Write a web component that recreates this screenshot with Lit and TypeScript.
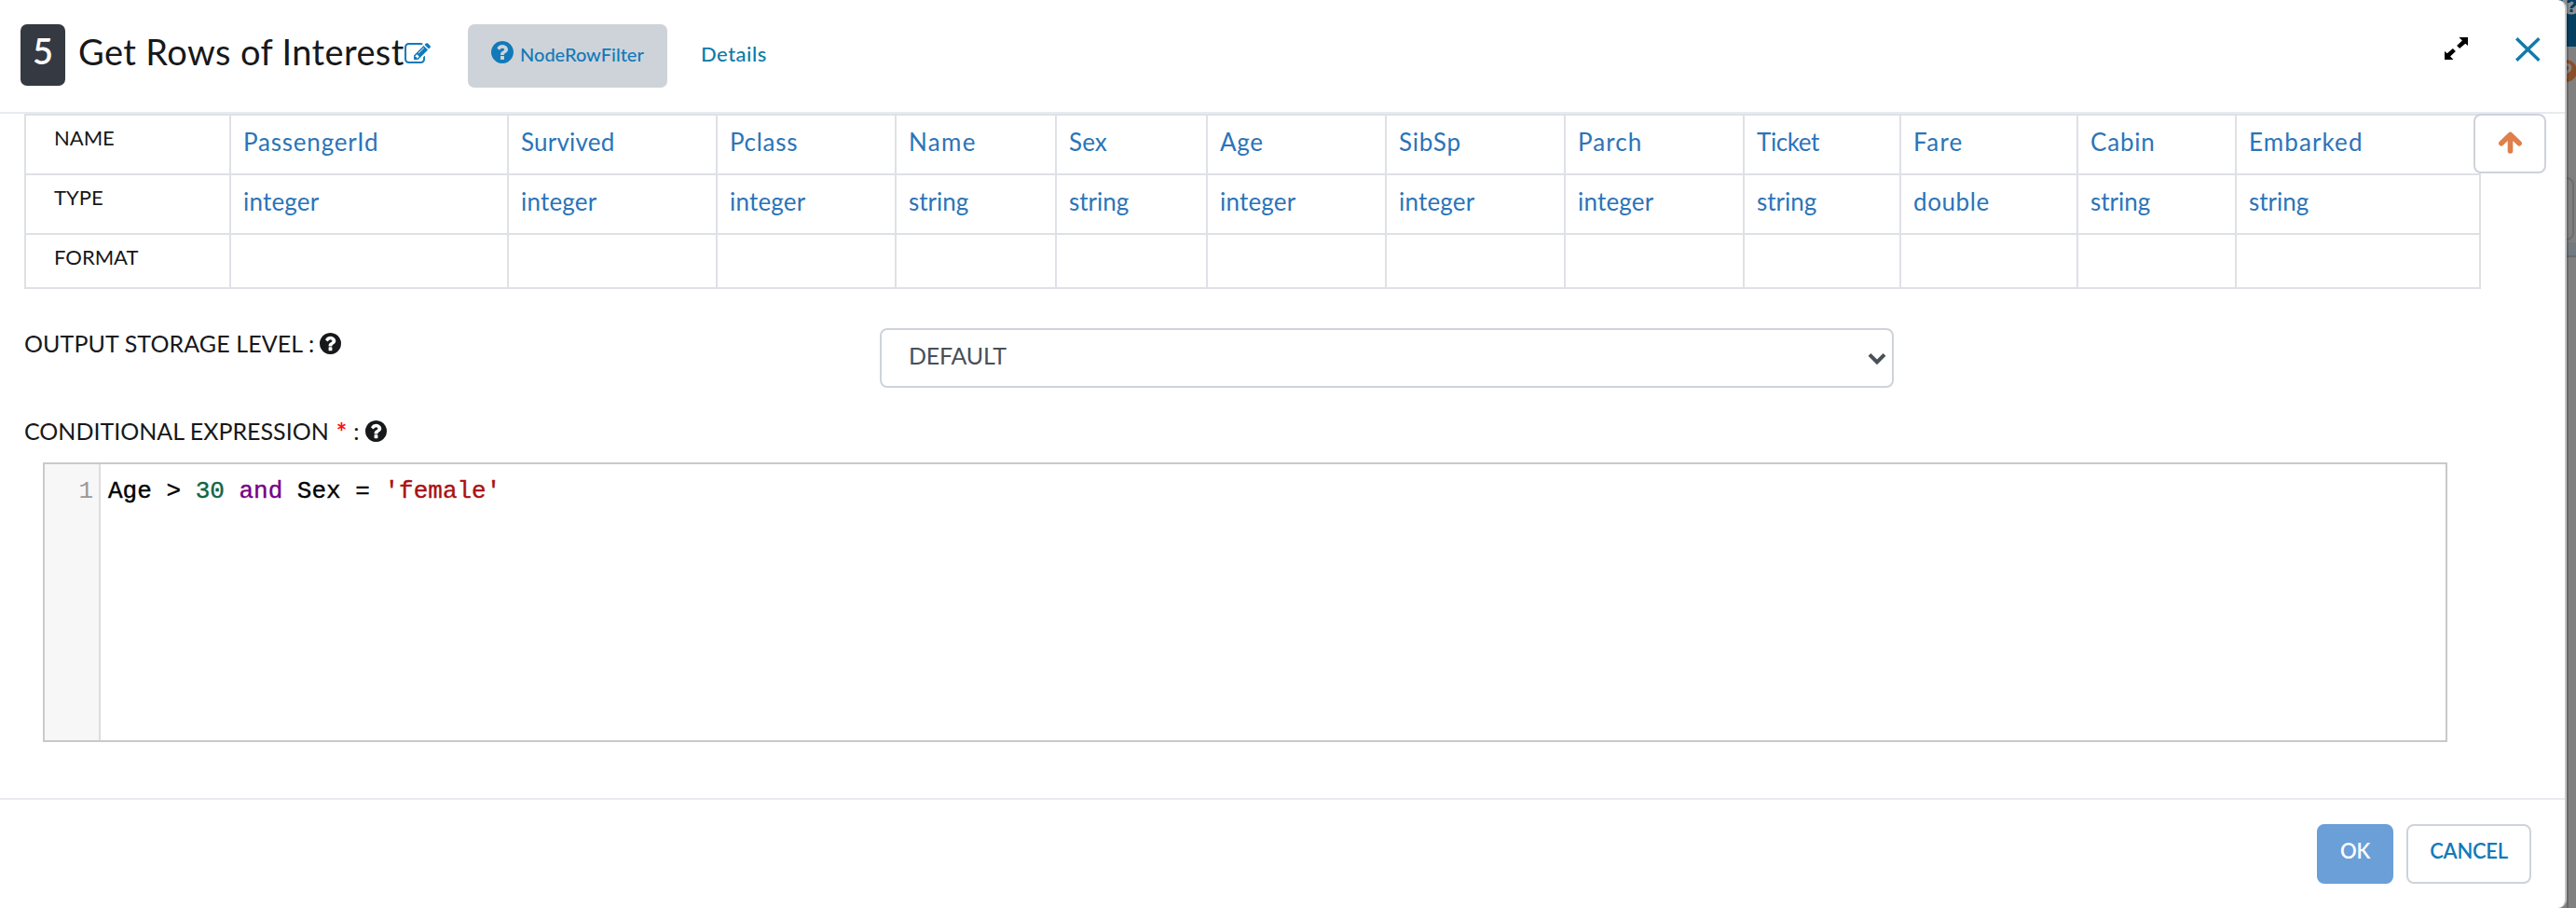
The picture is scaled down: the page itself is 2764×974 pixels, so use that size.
import { LitElement, html, css } from "lit";
import { customElement } from "lit/decorators.js";

interface Column {
  name: string;
  type: string;
  tracking: number;
}

const columns: Column[] = [
  { name: "PassengerId", type: "integer", tracking: 0.8 },
  { name: "Survived", type: "integer", tracking: 0.2 },
  { name: "Pclass", type: "integer", tracking: 0.7 },
  { name: "Name", type: "string", tracking: 1.3 },
  { name: "Sex", type: "string", tracking: 0.1 },
  { name: "Age", type: "integer", tracking: 0.7 },
  { name: "SibSp", type: "integer", tracking: 0.8 },
  { name: "Parch", type: "integer", tracking: 1.1 },
  { name: "Ticket", type: "string", tracking: -0.4 },
  { name: "Fare", type: "double", tracking: 1.3 },
  { name: "Cabin", type: "string", tracking: 0.8 },
  { name: "Embarked", type: "string", tracking: 1.1 },
];

const typeTracking: Record<string, number> = { integer: 0.2, string: 0, double: 0.6 };

const helpPath =
  "M1024 1376v-192q0-14-9-23t-23-9h-192q-14 0-23 9t-9 23v192q0 14 9 23t23 9h192q14 0 23-9t9-23zm256-672q0-88-55.5-163t-138.5-116-170-41q-243 0-371 213-15 24 8 42l132 100q7 6 19 6 16 0 25-12 53-68 86-92 34-24 86-24 48 0 85.5 26t37.5 59q0 38-20 61t-68 45q-63 28-115.5 86.5t-52.5 125.5v36q0 14 9 23t23 9h192q14 0 23-9t9-23q0-19 21.5-49.5t54.5-49.5q32-18 49-28.5t46-35 44.5-48 28-60.5 12.5-81zm384 192q0 209-103 385.5t-279.5 279.5-385.5 103-385.5-103-279.5-279.5-103-385.5 103-385.5 279.5-279.5 385.5-103 385.5 103 279.5 279.5 103 385.5z";

const helpIcon = () => html`
  <svg class="help" viewBox="128 128 1536 1536"><path fill="currentColor" d=${helpPath}></path></svg>
`;

@customElement("app-root")
export class AppRoot extends LitElement {
  static styles = css`
    :host {
      display: grid;
      width: 2764px;
      height: 974px;
      overflow: hidden;
      background: #808080;
      font-family: Lato, sans-serif;
      color: #17181a;
    }
    * {
      box-sizing: border-box;
    }
    svg {
      display: block;
      flex: none;
    }
    .backdrop {
      grid-area: 1 / 1;
      justify-self: end;
    }
    .modal {
      grid-area: 1 / 1;
      width: 2754px;
      height: 974px;
      display: flex;
      flex-direction: column;
      background: #fff;
      border-right: 2px solid #c6c6c6;
      border-radius: 0 9px 9px 0;
      white-space: nowrap;
    }
    .header {
      display: flex;
      align-items: flex-start;
      height: 122px;
      padding: 26px 26px 0 22px;
      border-bottom: 2px solid #e7ebef;
      flex: none;
    }
    .badge {
      width: 48px;
      height: 66px;
      border-radius: 7px;
      background: #353942;
      color: #fff;
      font-size: 38px;
      font-weight: 600;
      line-height: 57px;
      text-align: center;
    }
    .title {
      margin: 0 0 0 14px;
      width: 350px;
      font-size: 38px;
      font-weight: 400;
      line-height: 58px;
      letter-spacing: 0.38px;
    }
    .edit {
      width: 28px;
      height: 22px;
      margin-top: 20px;
      color: #127ab8;
    }
    .chip {
      display: flex;
      width: 214px;
      height: 68px;
      margin-left: 40px;
      padding-left: 25px;
      border-radius: 7px;
      background: #ced3da;
      color: #127ab8;
      font-size: 20px;
      font-weight: 500;
      line-height: 65px;
    }
    .chip .help {
      width: 24px;
      height: 24px;
      margin: 18px 7px 0 0;
    }
    .details {
      margin-left: 36px;
      color: #0e79ab;
      font-size: 22px;
      font-weight: 500;
      line-height: 64px;
      letter-spacing: 0.5px;
    }
    .tools {
      display: flex;
      gap: 51px;
      margin: 14px 0 0 auto;
    }
    .body {
      flex: 1;
      display: flex;
      flex-direction: column;
    }
    .schema {
      display: flex;
      align-items: flex-start;
      padding-left: 26px;
    }
    .grid {
      display: grid;
      grid-template-columns: 220px 298px 224px 192px 172px 162px 192px 192px 192px 168px 190px 170px 262px;
      grid-template-rows: 64px 64px 58px;
      border: solid #dee1e5;
      border-width: 2px 0 0 2px;
      flex: none;
    }
    .cell {
      border: solid #dee1e5;
      border-width: 0 2px 2px 0;
      padding-left: 13px;
      font-size: 26px;
      line-height: 57px;
      color: #2b74b8;
    }
    .head {
      padding-left: 30px;
      font-size: 22px;
      line-height: 47px;
      color: #17181a;
    }
    .up {
      width: 78px;
      height: 64px;
      margin-left: -8px;
      display: flex;
      justify-content: center;
      padding: 17px 0 0;
      border: 2px solid #ced3da;
      border-radius: 8px;
      background: #fff;
    }
    .label {
      display: flex;
      font-size: 25px;
      line-height: 33px;
    }
    .label .help {
      width: 23px;
      height: 23px;
      margin: 5px 0 0 6px;
    }
    .storage {
      display: flex;
      padding: 42px 0 0 26px;
    }
    .storage .label {
      width: 918px;
      letter-spacing: 0.1px;
    }
    .select {
      display: flex;
      justify-content: space-between;
      width: 1088px;
      height: 64px;
      padding: 0 6px 0 29px;
      border: 2px solid #ced3da;
      border-radius: 8px;
      font-size: 25px;
      letter-spacing: -0.2px;
      line-height: 54px;
      color: #495057;
    }
    .select svg {
      margin-top: 24px;
    }
    .condition {
      padding-left: 26px;
      margin: 30px 0 17px;
    }
    .required {
      margin-left: 8px;
      color: #ff0f14;
      font-size: 27px;
      font-weight: 700;
    }
    .colon {
      margin-left: 7px;
    }
    .editor {
      display: flex;
      width: 2580px;
      height: 300px;
      margin-left: 46px;
      border: 2px solid #c9c9c9;
      font-family: "Liberation Mono", "Courier New", monospace;
      font-size: 26px;
      line-height: 58px;
      color: #000;
    }
    .gutter {
      width: 60px;
      padding-right: 6px;
      border-right: 2px solid #ddd;
      background: #f7f7f7;
      color: #999;
      text-align: right;
    }
    .code {
      padding-left: 8px;
      white-space: pre;
      -webkit-text-stroke: 0.4px currentColor;
    }
    .number {
      color: #116644;
    }
    .keyword {
      color: #770088;
    }
    .string {
      color: #aa1111;
    }
    .footer {
      display: flex;
      justify-content: flex-end;
      gap: 14px;
      height: 118px;
      padding: 26px 36px 0 0;
      border-top: 2px solid #e7ebef;
      flex: none;
    }
    .button {
      height: 64px;
      padding: 0 0 8px;
      border: 2px solid #ced3da;
      border-radius: 8px;
      background: #fff;
      font-family: inherit;
      font-size: 22px;
      font-weight: 600;
      letter-spacing: -0.3px;
      text-align: center;
      color: #127ab8;
    }
    .ok {
      width: 82px;
      border-color: #6b9fd8;
      background: #6b9fd8;
      color: #fff;
    }
    .cancel {
      width: 134px;
    }
  `;

  private backdrop() {
    return html`
      <svg class="backdrop" width="20" height="974" viewBox="0 0 20 974">
        <rect width="20" height="974" fill="#808080"></rect>
        <rect width="20" height="50" fill="#043f61"></rect>
        <circle cx="15" cy="5" r="10.5" fill="#8b8f92"></circle>
        <path d="M12 3c0-4 7-4 7 0s-4 3-4 6m0 1v3" fill="none" stroke="#043f61" stroke-width="3"></path>
        <circle cx="9" cy="76" r="12" fill="#8a4f28"></circle>
        <path d="M5 72c1-4 9-4 9 1 0 4-5 3-5 7m0 1v3" fill="none" stroke="#858585" stroke-width="3"></path>
        <rect x="-20" y="191" width="37" height="66" rx="7" fill="none" stroke="#6b6d70" stroke-width="2"></rect>
        <rect y="260" width="20" height="14" fill="#727a81"></rect>
        <rect y="274" width="20" height="2" fill="#666a6e"></rect>
        <rect x="10" width="2" height="974" fill="#000" opacity=".18"></rect>
      </svg>
    `;
  }

  private tools() {
    return html`
      <div class="tools">
        <svg width="25" height="24" viewBox="0 0 25 24" fill="#000">
          <path d="M15.5 0H25v9l-2.7-2.2-6.2 5.2-3-3 5.8-5.6z"></path>
          <path d="M9.5 24H0v-9l2.7 2.2L8.9 12l3 3-5.8 5.6z"></path>
        </svg>
        <svg width="27" height="26" viewBox="0 0 27 26" fill="none" stroke="#0f7bab" stroke-width="3.4">
          <path d="M1.2 1.2 25.4 24.8M25.4 1.2 1.2 24.8"></path>
        </svg>
      </div>
    `;
  }

  render() {
    return html`
      ${this.backdrop()}
      <div class="modal">
        <div class="header">
          <div class="badge">5</div>
          <h1 class="title">Get Rows of Interest</h1>
          <svg class="edit" viewBox="0 128 1784 1408">
            <path fill="currentColor" d="M888 1184l116-116-152-152-116 116v56h96v96h56zm440-720q-16-16-33 1l-350 350q-17 17-1 33t33-1l350-350q17-17 1-33zm80 594v190q0 119-84.5 203.5t-203.5 84.5h-832q-119 0-203.5-84.5t-84.5-203.5v-832q0-119 84.5-203.5t203.5-84.5h832q63 0 117 25 15 7 18 23 3 17-9 29l-49 49q-14 14-32 8-23-6-45-6h-832q-66 0-113 47t-47 113v832q0 66 47 113t113 47h832q66 0 113-47t47-113v-126q0-13 9-22l64-64q15-15 35-7t20 29zm-96-738l288 288-672 672h-288v-288zm444 132l-92 92-288-288 92-92q28-28 68-28t68 28l152 152q28 28 28 68t-28 68z"></path>
          </svg>
          <div class="chip">${helpIcon()}<span>NodeRowFilter</span></div>
          <div class="details">Details</div>
          ${this.tools()}
        </div>

        <div class="body">
          <div class="schema">
            <div class="grid">
              <div class="cell head">NAME</div>
              ${columns.map((c) => html`<div class="cell" style="letter-spacing:${c.tracking}px">${c.name}</div>`)}
              <div class="cell head">TYPE</div>
              ${columns.map((c) => html`<div class="cell" style="letter-spacing:${typeTracking[c.type]}px">${c.type}</div>`)}
              <div class="cell head">FORMAT</div>
              ${columns.map(() => html`<div class="cell"></div>`)}
            </div>
            <div class="up">
              <svg width="25" height="24" viewBox="0 0 25 24" fill="none" stroke="#df7f49" stroke-width="5.6" stroke-linecap="round" stroke-linejoin="round">
                <path d="M12.5 21V4M2.9 12.8 12.5 3.4l9.6 9.4"></path>
              </svg>
            </div>
          </div>

          <div class="storage">
            <div class="label">OUTPUT STORAGE LEVEL :${helpIcon()}</div>
            <div class="select">
              <span>DEFAULT</span>
              <svg width="20" height="14" viewBox="0 0 20 14" fill="none" stroke="#495057" stroke-width="4">
                <path d="M2 2.4 10 10.4 18 2.4"></path>
              </svg>
            </div>
          </div>

          <div class="label condition">
            CONDITIONAL EXPRESSION<span class="required">*</span><span class="colon">:</span>${helpIcon()}
          </div>
          <div class="editor">
            <div class="gutter">1</div>
            <div class="code">Age &gt; <span class="number">30</span> <span class="keyword">and</span> Sex = <span class="string">'female'</span></div>
          </div>
        </div>

        <div class="footer">
          <button class="button ok">OK</button>
          <button class="button cancel">CANCEL</button>
        </div>
      </div>
    `;
  }
}
